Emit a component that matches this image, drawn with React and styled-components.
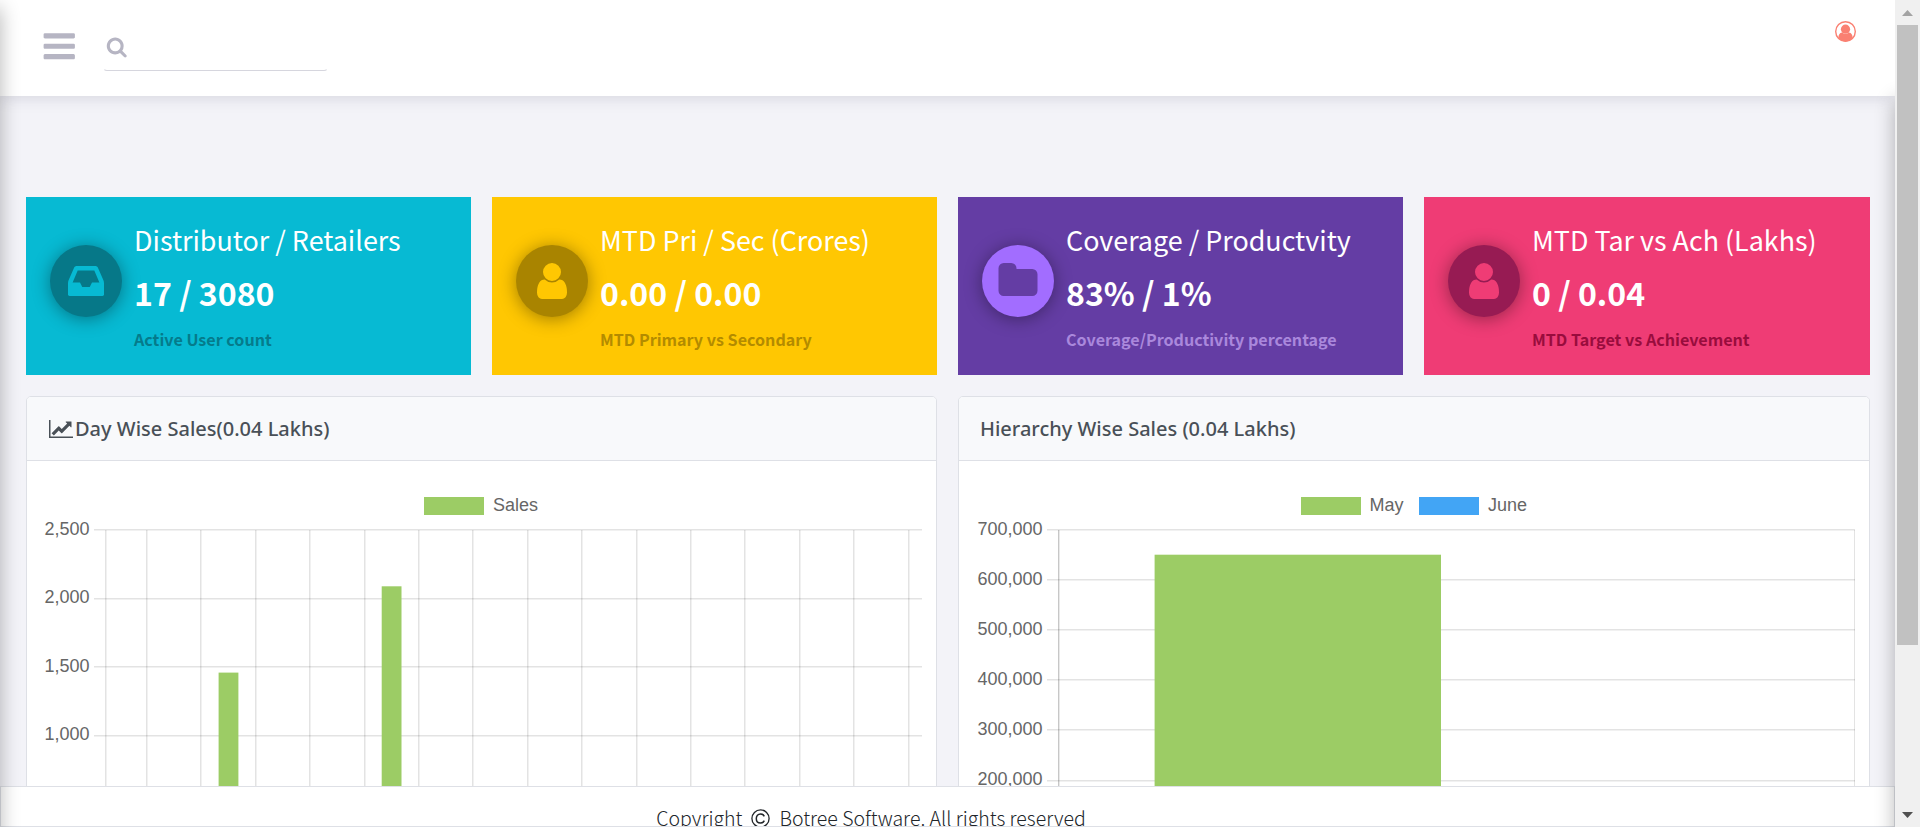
import React from 'react';
import styled, { createGlobalStyle } from 'styled-components';

const GlobalStyle = createGlobalStyle`
  * { box-sizing: border-box; }
  body { margin: 0; overflow: hidden; background: #f3f3f8; }
`;

const sourceStack = `"Noto Sans CJK SC", "Noto Sans", sans-serif`;

const Shell = styled.div`
  display: flex;
  width: 100%;
  height: 827px;
  overflow: hidden;
  font-family: ${sourceStack};
`;

const Page = styled.div`
  position: relative;
  flex: 1;
  min-width: 0;
  display: flex;
  flex-direction: column;
  overflow: hidden;
  background: #f3f3f8;
`;

const EdgeShadow = styled.div`
  position: absolute;
  z-index: 3;
  width: 20px;
  top: ${(p) => p.$top}px;
  bottom: -30px;
  ${(p) => p.$side}: -20px;
  box-shadow: 0 0 20px rgba(0, 0, 0, 0.3);
  pointer-events: none;
`;

const TopBar = styled.header`
  position: relative;
  flex: none;
  height: 96px;
  display: flex;
  align-items: flex-start;
  padding: 21px 39px 0 41px;
  background: #fff;
  box-shadow: 0 1px 15px rgba(69, 65, 98, 0.18);
`;

const MenuButton = styled.button`
  margin: 7px 25px 0 0;
  padding: 0;
  border: 0;
  background: none;
  color: #b6b5c3;
  line-height: 0;
`;

const SearchField = styled.label`
  width: 225px;
  height: 50px;
  padding: 14px 2px 0;
  border: 1px solid transparent;
  border-bottom-color: #d6d6de;
  border-radius: 4px;
  color: #b6b5c3;
  line-height: 0;
`;

const UserButton = styled.button`
  margin-left: auto;
  padding: 0;
  border: 0;
  background: none;
  color: #fa8072;
  line-height: 0;
`;

const Content = styled.main`
  flex: 1;
  min-height: 0;
  overflow: hidden;
  padding: 101px 25px 0 26px;
  display: flex;
  flex-direction: column;
  gap: 21px;
`;

const StatGrid = styled.section`
  display: grid;
  grid-template-columns: repeat(3, 445px) 1fr;
  gap: 21px;
`;

const StatCard = styled.article`
  height: 178px;
  display: flex;
  gap: 12px;
  padding: 20px 10px 0 24px;
  background: ${(p) => p.$bg};
`;

const StatIcon = styled.div`
  flex: none;
  width: 72px;
  height: 72px;
  margin-top: 28px;
  border-radius: 50%;
  display: grid;
  place-items: center;
  background: ${(p) => p.$bg};
  color: ${(p) => p.$fg};
  box-shadow: 0 2px 18px rgba(0, 0, 0, 0.38);
`;

const StatText = styled.div`
  padding-top: 3px;
  white-space: nowrap;
`;

const StatTitle = styled.div`
  font-size: 26.9px;
  line-height: 40px;
  color: #fff;
`;

const StatValue = styled.div`
  margin-top: 12px;
  font-size: 32.1px;
  font-weight: 700;
  line-height: 40px;
  color: #fff;
`;

const StatNote = styled.div`
  margin-top: 15px;
  font-size: 16.1px;
  font-weight: 700;
  line-height: 24px;
  color: ${(p) => p.$color};
`;

const PanelGrid = styled.section`
  flex: none;
  display: grid;
  grid-template-columns: 911px 1fr;
  gap: 21px;
`;

const Panel = styled.article`
  height: 640px;
  overflow: hidden;
  background: #fff;
  border: 1px solid #dee0e6;
  border-radius: 5px;
`;

const PanelHeader = styled.h2`
  margin: 0;
  height: 64px;
  padding: 1px ${(p) => (p.$icon ? 22 : 21)}px 0;
  display: flex;
  align-items: center;
  gap: 2px;
  background: #f8f9fb;
  border-bottom: 1px solid #dee0e6;
  color: #495057;
  font-family: "Noto Sans", "Open Sans", sans-serif;
  font-size: 20px;
  font-weight: 500;
  line-height: 28px;
  white-space: nowrap;
`;

const Plot = styled.svg`
  display: block;
  font-family: "Liberation Sans", Arial, sans-serif;
  font-size: 18px;
  fill: #666;
`;

const Footer = styled.footer`
  position: relative;
  flex: none;
  height: 41px;
  overflow: hidden;
  display: flex;
  justify-content: center;
  gap: 9px;
  padding: 17px 153px 0 0;
  background: #fff;
  border: 1px solid #dee0e6;
  color: #212529;
  font-size: 19.5px;
  font-weight: 300;
  line-height: 28px;
  white-space: nowrap;
`;

const CopyrightIcon = styled.svg`
  flex: none;
  margin-top: 5px;
`;

const Scrollbar = styled.aside`
  flex: none;
  width: 25px;
  display: flex;
  flex-direction: column;
  align-items: center;
  background: #f0f0f0;
`;

const ScrollArrow = styled.div`
  height: 25px;
  display: grid;
  place-items: center;
  color: ${(p) => p.$color};
`;

const ScrollTrack = styled.div`
  flex: 1;
  width: 21px;
`;

const ScrollThumb = styled.div`
  height: 620px;
  background: #c1c1c1;
`;

const GLYPHS = {
  bars: 'M1664 1344v128q0 26-19 45t-45 19h-1408q-26 0-45-19t-19-45v-128q0-26 19-45t45-19h1408q26 0 45 19t19 45zm0-512v128q0 26-19 45t-45 19h-1408q-26 0-45-19t-19-45v-128q0-26 19-45t45-19h1408q26 0 45 19t19 45zm0-512v128q0 26-19 45t-45 19h-1408q-26 0-45-19t-19-45v-128q0-26 19-45t45-19h1408q26 0 45 19t19 45z',
  search: 'M1216 832q0-185-131.5-316.5t-316.5-131.5-316.5 131.5-131.5 316.5 131.5 316.5 316.5 131.5 316.5-131.5 131.5-316.5zm512 832q0 52-38 90t-90 38q-54 0-90-38l-343-342q-179 124-399 124-143 0-273.5-55.5t-225-150-150-225-55.5-273.5 55.5-273.5 150-225 225-150 273.5-55.5 273.5 55.5 225 150 150 225 55.5 273.5q0 220-124 399l343 343q37 37 37 90z',
  inbox: 'M1151 960h316q-1-3-2.5-8.5t-2.5-7.5l-212-496h-708l-212 496q-1 3-2.5 8.5t-2.5 7.5h316l95 192h320zm513 30v482q0 26-19 45t-45 19h-1408q-26 0-45-19t-19-45v-482q0-62 25-123l238-552q10-25 36.5-42t52.5-17h832q26 0 52.5 17t36.5 42l238 552q25 61 25 123z',
  user: 'M1536 1399q0 109-62.5 187t-150.5 78h-854q-88 0-150.5-78t-62.5-187q0-85 8.5-160.5t31.5-152 58.5-131 94-89 134.5-34.5q131 128 313 128t313-128q76 0 134.5 34.5t94 89 58.5 131 31.5 152 8.5 160.5zm-256-887q0 159-112.5 271.5t-271.5 112.5-271.5-112.5-112.5-271.5 112.5-271.5 271.5-112.5 271.5 112.5 112.5 271.5z',
  folder: 'M1728 608v704q0 92-66 158t-158 66h-1216q-92 0-158-66t-66-158v-960q0-92 66-158t158-66h320q92 0 158 66t66 158v32h672q92 0 158 66t66 158z',
};

const Glyph = ({ name, size }) => (
  <svg width={size} height={size} viewBox="0 0 1792 1792" fill="currentColor" aria-hidden="true">
    <path d={GLYPHS[name]} />
  </svg>
);

const LineChartGlyph = () => (
  <svg width="24" height="18" viewBox="0 128 2048 1536" fill="currentColor" aria-hidden="true">
    <path d="M2048 1536v128h-2048v-1536h128v1408h1920zm-128-1248v435q0 21-19.5 29.5t-35.5-7.5l-121-121-633 633q-10 10-23 10t-23-10l-233-233-416 416-192-192 585-585q10-10 23-10t23 10l233 233 464-464-121-121q-16-16-7.5-35.5t29.5-19.5h435q14 0 23 9t9 23z" />
  </svg>
);

const UserCircle = () => (
  <svg width="21" height="21" viewBox="0 0 21 21" aria-hidden="true">
    <circle cx="10.5" cy="10.5" r="9.8" fill="none" stroke="currentColor" strokeWidth="1.4" />
    <circle cx="10.5" cy="8.2" r="4.6" fill="currentColor" />
    <path
      d="M3.300 17c.2-2.900 1.200-5.200 3.700-5.400 1.900 1.900 5.100 1.900 7 0 2.500.200 3.500 2.500 3.700 5.400-1.700 2-4.300 3.400-7.200 3.400s-5.500-1.400-7.200-3.400z"
      fill="currentColor"
    />
  </svg>
);

const STATS = [
  { title: 'Distributor / Retailers', value: '17 / 3080', note: 'Active User count', icon: 'inbox', bg: '#07bad3', disc: '#067888', noteColor: '#057b8b' },
  { title: 'MTD Pri / Sec (Crores)', value: '0.00 / 0.00', note: 'MTD Primary vs Secondary', icon: 'user', bg: '#ffc702', disc: '#a98400', noteColor: '#b38b00' },
  { title: 'Coverage / Productvity', value: '83% / 1%', note: 'Coverage/Productivity percentage', icon: 'folder', bg: '#643da4', disc: '#a26dff', noteColor: '#aa88dc' },
  { title: 'MTD Tar vs Ach (Lakhs)', value: '0 / 0.04', note: 'MTD Target vs Achievement', icon: 'user', bg: '#ef3c75', disc: '#971b53', noteColor: '#990c3d' },
];

const GRID = 'rgba(0,0,0,0.11)';

// [label, grid line y, label baseline y]
const DAY_ROWS = [['2,500', 68, 74], ['2,000', 137, 142], ['1,500', 205, 211], ['1,000', 274, 279]];
const DAY_COLUMNS = [78, 119, 173, 228, 282, 337, 391, 445, 500, 554, 609, 663, 717, 772, 826, 881];
const DAY_BARS = [[191.6, 211.6], [354.700, 125.300]];

const HIERARCHY_ROWS = [
  ['700,000', 68, 74], ['600,000', 118, 124], ['500,000', 168, 174],
  ['400,000', 218, 224], ['300,000', 268, 274], ['200,000', 319, 324],
];

const DayChart = () => (
  <Plot width="909" height="400" viewBox="0 0 909 400">
    <rect x="397" y="36" width="60" height="18" fill="#9ccc65" />
    <text x="466" y="50">Sales</text>
    {DAY_ROWS.map(([label, y, base]) => (
      <g key={label}>
        <text x="62.500" y={base} textAnchor="end">{label}</text>
        <rect x="67" y={y} width="828" height="1.5" fill={GRID} />
      </g>
    ))}
    {DAY_COLUMNS.map((x) => (
      <rect key={x} x={x} y="69" width="1.5" height="331" fill={GRID} />
    ))}
    {DAY_BARS.map(([x, y]) => (
      <rect key={x} x={x} y={y} width="19.800" height={400 - y} fill="#9ccc65" />
    ))}
  </Plot>
);

const HierarchyChart = () => (
  <Plot width="909" height="400" viewBox="0 0 909 400">
    <rect x="342" y="36" width="60" height="18" fill="#9ccc65" />
    <text x="410.500" y="50">May</text>
    <rect x="460" y="36" width="60" height="18" fill="#42a5f5" />
    <text x="529" y="50">June</text>
    {HIERARCHY_ROWS.map(([label, y, base]) => (
      <g key={label}>
        <text x="83.500" y={base} textAnchor="end">{label}</text>
        <rect x="88" y={y} width="808" height="1.5" fill={GRID} />
      </g>
    ))}
    <rect x="99" y="69" width="1.4" height="331" fill="rgba(0,0,0,0.22)" />
    <rect x="895" y="69" width="1" height="331" fill={GRID} />
    <rect x="195.600" y="93.700" width="286.400" height="307" fill="#9ccc65" />
  </Plot>
);

export default function App() {
  return (
    <Shell>
      <GlobalStyle />
      <Page>
        <TopBar>
          <MenuButton aria-label="Menu"><Glyph name="bars" size={36.500} /></MenuButton>
          <SearchField aria-label="Search"><Glyph name="search" size={21.500} /></SearchField>
          <UserButton aria-label="Account"><UserCircle /></UserButton>
        </TopBar>
        <Content>
          <StatGrid>
            {STATS.map((s) => (
              <StatCard key={s.title} $bg={s.bg}>
                <StatIcon $bg={s.disc} $fg={s.bg}><Glyph name={s.icon} size={42} /></StatIcon>
                <StatText>
                  <StatTitle>{s.title}</StatTitle>
                  <StatValue>{s.value}</StatValue>
                  <StatNote $color={s.noteColor}>{s.note}</StatNote>
                </StatText>
              </StatCard>
            ))}
          </StatGrid>
          <PanelGrid>
            <Panel>
              <PanelHeader $icon><LineChartGlyph />Day Wise Sales(0.04 Lakhs)</PanelHeader>
              <DayChart />
            </Panel>
            <Panel>
              <PanelHeader>Hierarchy Wise Sales (0.04 Lakhs)</PanelHeader>
              <HierarchyChart />
            </Panel>
          </PanelGrid>
        </Content>
        <Footer>
          <span>Copyright</span>
          <CopyrightIcon width="19" height="19" viewBox="0 0 19 19" fill="none" stroke="currentColor">
            <circle cx="9.500" cy="9.500" r="8.600" strokeWidth="1.300" />
            <path d="M13.300 7.400C12.600 5.700 11.300 4.900 9.500 4.900 6.900 4.900 5.300 6.900 5.300 9.500s1.600 4.600 4.200 4.600c1.800 0 3.100-.9 3.800-2.500" strokeWidth="1.500" />
          </CopyrightIcon>
          <span>Botree Software. All rights reserved</span>
        </Footer>
        <EdgeShadow $side="left" $top={8} />
        <EdgeShadow $side="right" $top={100} />
      </Page>
      <Scrollbar>
        <ScrollArrow $color="#a3a3a3">
          <svg width="11" height="6" viewBox="0 0 11 6"><path d="M0 6 5.500 0 11 6z" fill="currentColor" /></svg>
        </ScrollArrow>
        <ScrollTrack><ScrollThumb /></ScrollTrack>
        <ScrollArrow $color="#505050">
          <svg width="11" height="6" viewBox="0 0 11 6"><path d="M0 0 5.500 6 11 0z" fill="currentColor" /></svg>
        </ScrollArrow>
      </Scrollbar>
    </Shell>
  );
}
